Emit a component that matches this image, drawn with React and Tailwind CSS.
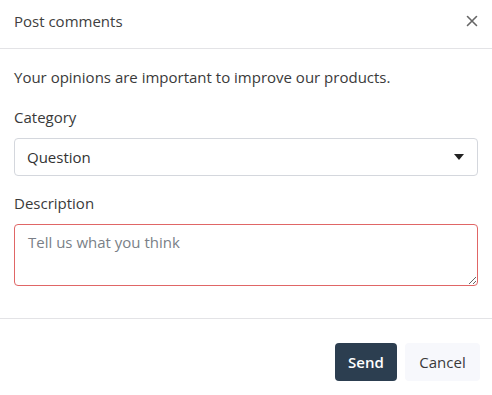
import React, { useState } from 'react';

const App = () => {
  const [category, setCategory] = useState('Question');
  const [description, setDescription] = useState('');

  return (
    <div className="w-[492px] h-[395px] bg-white text-[#3a3a3a] font-['Open_Sans','Noto_Sans',sans-serif]">
      <div className="h-[49px] flex items-center justify-between pl-[14px] pr-[10px] pb-[6px] border-b border-[#e3e3e6]">
        <h2 className="text-[15px] text-[#404040]">Post comments</h2>
        <button className="text-[#666] p-1" aria-label="Close">
          <svg width="12" height="12" viewBox="0 0 12 12" stroke="currentColor" strokeWidth="1.6" strokeLinecap="round">
            <path d="M1.5 1.5 L10.5 10.5 M10.5 1.5 L1.5 10.5" />
          </svg>
        </button>
      </div>

      <div className="px-[14px] pt-[18px] pb-[32px] border-b border-[#e3e3e6]">
        <p className="text-[15px] leading-5">Your opinions are important to improve our products.</p>

        <label className="block mt-5 text-[15px] leading-5">Category</label>
        <div className="relative mt-[11px]">
          <select
            value={category}
            onChange={(e) => setCategory(e.target.value)}
            className="w-full h-[38px] appearance-none rounded border border-[#d4d7dd] bg-white pl-[12px] pr-8 text-[15px] text-[#333] outline-none"
          >
            <option>Question</option>
            <option>Suggestion</option>
            <option>Bug report</option>
          </select>
          <svg className="absolute right-[14px] top-[16px] pointer-events-none" width="10" height="6" viewBox="0 0 10 6">
            <path d="M0 0 H10 L5 6 Z" fill="#222" />
          </svg>
        </div>

        <label className="block mt-[17px] text-[15px] leading-5">Description</label>
        <textarea
          value={description}
          onChange={(e) => setDescription(e.target.value)}
          placeholder="Tell us what you think"
          className="block w-full h-[62px] mt-[11px] rounded border border-[#e06666] px-[13px] py-[7px] text-[15px] leading-5 placeholder-[#7a7f87] outline-none"
        />
      </div>

      <div className="flex justify-end gap-2 pr-3 pt-6">
        <button className="h-[38px] w-[62px] rounded bg-[#2c3e50] text-white text-[15px] font-semibold">Send</button>
        <button className="h-[38px] w-[75px] rounded bg-[#f7f8fc] text-[#3a3a3a] text-[15px]">Cancel</button>
      </div>
    </div>
  );
};

export default App;
